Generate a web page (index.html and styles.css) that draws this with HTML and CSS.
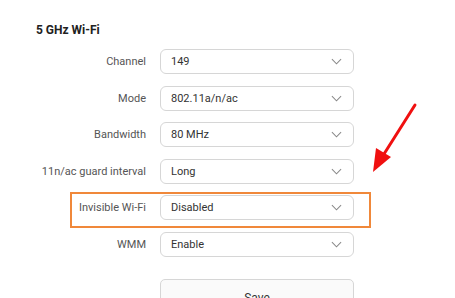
FILE: index.html
```html
<!DOCTYPE html>
<html lang="en">
<head>
  <meta charset="utf-8">
  <title>5 GHz Wi-Fi</title>
  <link rel="stylesheet" href="styles.css">
</head>
<body>
  <section class="panel">
    <h2 class="panel-title">5 GHz Wi-Fi</h2>
    <div class="form">
      <div class="row">
        <label class="row-label">Channel</label>
        <div class="select"><span>149</span><svg class="chevron" viewBox="0 0 12 7"><path d="M1 1l5 5 5-5"/></svg></div>
      </div>
      <div class="row">
        <label class="row-label">Mode</label>
        <div class="select"><span>802.11a/n/ac</span><svg class="chevron" viewBox="0 0 12 7"><path d="M1 1l5 5 5-5"/></svg></div>
      </div>
      <div class="row">
        <label class="row-label">Bandwidth</label>
        <div class="select"><span>80 MHz</span><svg class="chevron" viewBox="0 0 12 7"><path d="M1 1l5 5 5-5"/></svg></div>
      </div>
      <div class="row">
        <label class="row-label">11n/ac guard interval</label>
        <div class="select"><span>Long</span><svg class="chevron" viewBox="0 0 12 7"><path d="M1 1l5 5 5-5"/></svg></div>
      </div>
      <div class="row row-marked">
        <label class="row-label">Invisible Wi-Fi</label>
        <div class="select"><span>Disabled</span><svg class="chevron" viewBox="0 0 12 7"><path d="M1 1l5 5 5-5"/></svg></div>
      </div>
      <div class="row">
        <label class="row-label">WMM</label>
        <div class="select"><span>Enable</span><svg class="chevron" viewBox="0 0 12 7"><path d="M1 1l5 5 5-5"/></svg></div>
      </div>
      <div class="row row-actions">
        <span></span>
        <button class="btn">Save</button>
      </div>
    </div>
  </section>
  <svg class="pointer" viewBox="0 0 455 298" width="455" height="298">
    <path d="M415 105 L384 154" stroke="#f01010" stroke-width="3" stroke-linecap="round" fill="none"/>
    <path d="M373 172 L376 148 L391 157 Z" fill="#f01010"/>
  </svg>
</body>
</html>
```

FILE: styles.css
```css
*, *::before, *::after {
  margin: 0;
  padding: 0;
  box-sizing: border-box;
}

body {
  position: relative;
  width: 455px;
  height: 298px;
  overflow: hidden;
  background-color: #FFFFFF;
  color: #333333;
  font-family: "Roboto", sans-serif;
}

.panel {
  padding: 23px 0 0 36px;
}

.panel-title {
  margin-bottom: 12px;
  font-size: 12px;
  line-height: 14px;
  font-weight: 700;
  color: #222222;
}

.form {
  display: flex;
  flex-direction: column;
  gap: 11.5px;
}

.row {
  position: relative;
  display: grid;
  grid-template-columns: 110px 194px;
  column-gap: 14px;
  align-items: center;
}

.row-label {
  text-align: right;
  font-size: 11px;
  color: #555555;
}

.select {
  display: flex;
  align-items: center;
  justify-content: space-between;
  height: 25px;
  padding: 0 11px 0 10px;
  border: 1px solid #D6D6D6;
  border-radius: 6px;
  font-size: 11px;
  color: #333333;
}

.chevron {
  width: 11px;
  height: 7px;
  fill: none;
  stroke: #888888;
  stroke-width: 1.1;
}

.row-marked::after {
  content: "";
  position: absolute;
  left: 34px;
  top: -3px;
  width: 301px;
  height: 36px;
  border: 2px solid #F0883A;
}

.row-actions {
  margin-top: 10.5px;
}

.btn {
  display: flex;
  justify-content: center;
  align-items: flex-start;
  align-self: start;
  height: 30px;
  padding-top: 11px;
  border: 1px solid #D6D6D6;
  border-radius: 5px;
  background-color: #FAFAFA;
  font-family: inherit;
  font-size: 12px;
  color: #333333;
}

.pointer {
  position: absolute;
  left: 0;
  top: 0;
  pointer-events: none;
}
```
